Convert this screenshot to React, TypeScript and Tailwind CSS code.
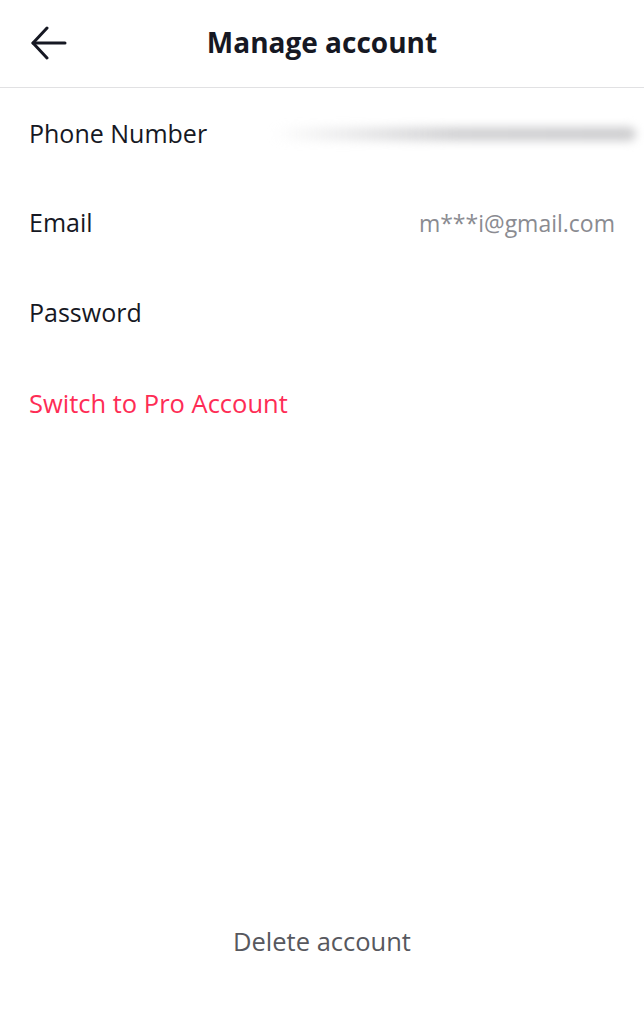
const font = { fontFamily: '"Open Sans", Lato, sans-serif' };

function BackArrow() {
  return (
    <svg width="36" height="34" viewBox="0 0 36 34" fill="none" stroke="#161823" strokeWidth="3" strokeLinecap="round" strokeLinejoin="round">
      <path d="M34 17 H2" />
      <path d="M16 2 L2 17 L16 32" />
    </svg>
  );
}

export default function App() {
  return (
    <div className="flex min-h-screen w-full flex-col bg-white text-[#161823]" style={font}>
      {/* Header */}
      <div className="relative flex h-[88px] items-center justify-center border-b border-[#e1e1e3] pb-[4px]">
        <button className="absolute left-[31px] top-[26px]">
          <BackArrow />
        </button>
        <h1 className="text-[28px] font-bold">Manage account</h1>
      </div>

      {/* Rows */}
      <div className="flex h-[90px] items-center pl-[29px] pr-[8px] pt-[2px]">
        <span className="text-[25px]">Phone Number</span>
        <div className="ml-[64px] flex flex-1 items-center">
          <div className="h-[14px] w-full rounded-full bg-gradient-to-r from-transparent via-[#d2d2d4] to-[#cdcdcf] blur-[5px]" />
        </div>
      </div>
      <div className="flex h-[90px] items-center justify-between pl-[29px] pr-[29px]">
        <span className="text-[25px]">Email</span>
        <span className="text-[23px] text-[#8a8b91]">m***i@gmail.com</span>
      </div>
      <div className="flex h-[90px] items-center pl-[29px]">
        <span className="text-[25px]">Password</span>
      </div>
      <div className="flex h-[90px] items-center pl-[29px]">
        <span className="text-[25.5px] text-[#fe2c55]">Switch to Pro Account</span>
      </div>

      <div className="flex-1" />

      {/* Footer */}
      <div className="mb-[53px] flex h-[60px] items-center justify-center">
        <span className="text-[25.5px] text-[#57585e]">Delete account</span>
      </div>
    </div>
  );
}
